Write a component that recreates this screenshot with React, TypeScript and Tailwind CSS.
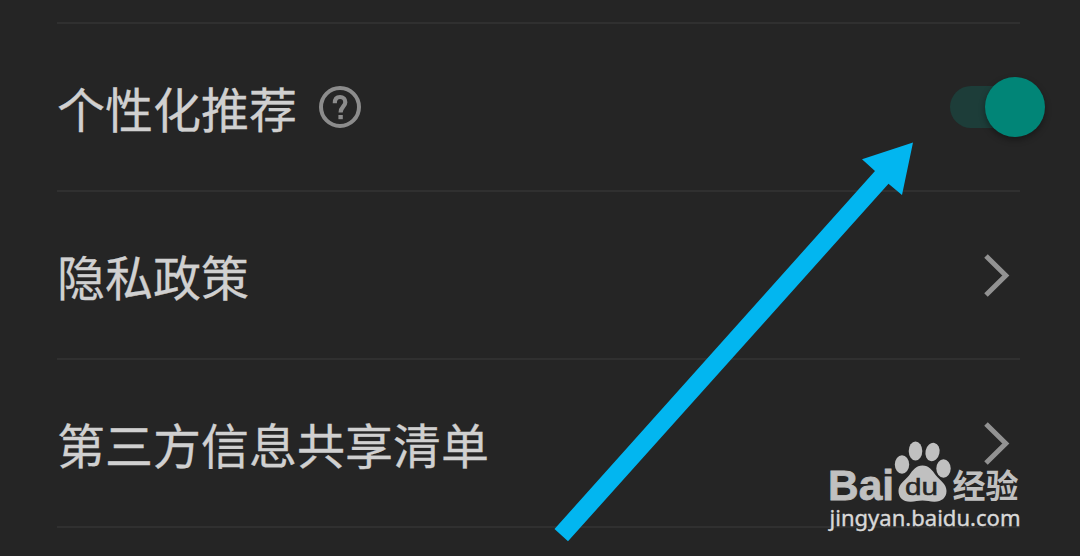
import React from 'react';

const Chevron = () => (
  <svg className="w-7 h-12 mr-2" viewBox="0 0 28 48" fill="none">
    <path d="M2 5 L21.8 24.5 L2 44" stroke="#929292" strokeWidth="5" />
  </svg>
);

const HelpIcon = () => (
  <svg className="w-[42px] h-[42px]" viewBox="0 0 42 42" fill="none">
    <circle cx="21" cy="21" r="19" stroke="#8c8c8c" strokeWidth="4" />
    <path
      d="M15.8 17.2 C15.8 13.2 17.8 11 21 11 C24.3 11 26.3 13.2 26.3 16.2 C26.3 20.6 21.6 20.6 21.6 26.6"
      stroke="#8c8c8c"
      strokeWidth="4.2"
    />
    <rect x="19.4" y="29" width="4.4" height="4.2" fill="#8c8c8c" />
  </svg>
);

const Toggle = () => (
  <div className="relative w-[95px] h-[60px] -mr-[25px]">
    <div className="absolute left-0 top-[9px] w-[84px] h-[42px] rounded-full bg-[#1d3d39]" />
    <div className="absolute right-0 top-0 size-[60px] rounded-full bg-[#018577] shadow-[0_3px_6px_rgba(0,0,0,0.35)]" />
  </div>
);

type RowProps = {
  label: string;
  help?: boolean;
  children: React.ReactNode;
};

const Row = ({ label, help, children }: RowProps) => (
  <div className="h-[168px] flex items-center justify-between border-b-2 border-[#303030]">
    <div className="flex items-center gap-[22px]">
      <span className="text-[48px] leading-[60px] whitespace-nowrap [-webkit-text-stroke:0.3px_#d0d0d0]">{label}</span>
      {help && <HelpIcon />}
    </div>
    {children}
  </div>
);

const Arrow = () => (
  <svg className="absolute left-0 top-0 w-[1080px] h-[556px]" viewBox="0 0 1080 556">
    <path d="M913 142.5 L862 159.2 L875 171 L554.5 529 L568 541.3 L888.5 183.8 L902 195 Z" fill="#02b6f0" />
  </svg>
);

const Watermark = () => (
  <svg className="absolute left-[820px] top-[430px] w-[220px] h-[110px]" viewBox="820 430 220 110">
    <g fill="#c0c0c0">
      <text x="828" y="500" fontSize="43" fontWeight="700" stroke="#c0c0c0" strokeWidth="0.8" textLength="66" lengthAdjust="spacingAndGlyphs" className="font-['Liberation_Sans',sans-serif]">Bai</text>
      <ellipse cx="902" cy="464.500" rx="7.200" ry="9.300" />
      <ellipse cx="915.500" cy="451" rx="6.800" ry="9.600" />
      <ellipse cx="932.500" cy="452" rx="7" ry="9.300" transform="rotate(12 932.500 452)" />
      <ellipse cx="943.500" cy="468.500" rx="7.200" ry="9.200" />
      <path d="M922.500 465.500 C929 465.500 932 470 936 475.500 C940 480.500 946.500 484 946.500 491 C946.500 498 941 502 934 501.700 C930 501.500 927 500.500 922.500 500.500 C918 500.500 915 501.700 911 501.700 C903 502 898.500 497.500 898.500 491 C898.500 484 905 480.500 909 475.500 C913 470 916 465.500 922.500 465.500 Z" />
      <text x="952.500" y="497.500" fontSize="33" fontWeight="700" textLength="66" lengthAdjust="spacingAndGlyphs" className="font-['Noto_Sans_CJK_SC',sans-serif]">经验</text>
    </g>
    <text x="905" y="495" fontSize="24" fill="#252525" stroke="#252525" strokeWidth="0.5" textLength="33" lengthAdjust="spacingAndGlyphs" className="font-['Liberation_Sans',sans-serif]">du</text>
    <text x="829.5" y="526" fontSize="22" fill="#d8d8d8" stroke="#d8d8d8" strokeWidth="0.4" textLength="191" lengthAdjust="spacingAndGlyphs" className="font-['Noto_Sans',sans-serif]">jingyan.baidu.com</text>
  </svg>
);

const App = () => {
  return (
    <div className="relative w-[1080px] h-[556px] overflow-hidden bg-[#252525] text-[#d0d0d0] font-['Noto_Sans_CJK_SC',sans-serif]">
      <div className="ml-[57px] mr-[60px] pt-[22px]">
        <div className="h-0.5 bg-[#303030]" />
        <Row label="个性化推荐" help>
          <Toggle />
        </Row>
        <Row label="隐私政策">
          <Chevron />
        </Row>
        <Row label="第三方信息共享清单">
          <Chevron />
        </Row>
      </div>
      <Arrow />
      <Watermark />
    </div>
  );
};

export default App;
